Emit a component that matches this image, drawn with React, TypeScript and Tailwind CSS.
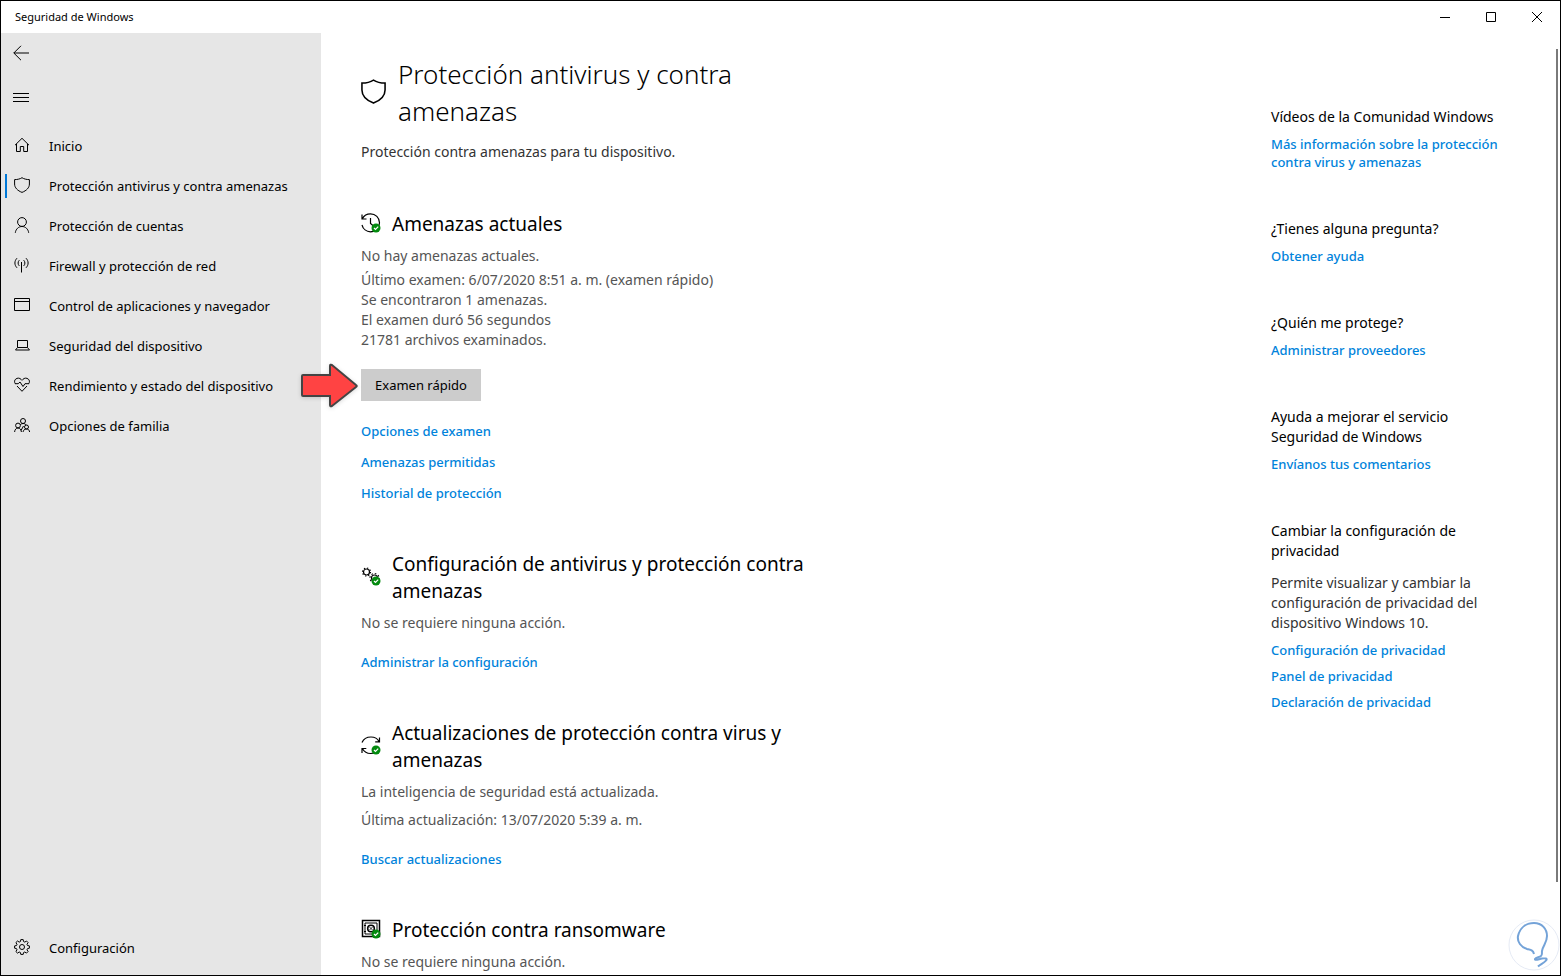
import React from "react";

interface IconProps {
  className?: string;
}

interface NavItem {
  label: string;
  icon: React.ReactNode;
  active?: boolean;
}

interface SectionProps {
  title: string;
  icon: React.ReactNode;
  children: React.ReactNode;
}

interface HelpBlockProps {
  title: string;
  links: string[];
  children?: React.ReactNode;
}

function LineIcon({
  children,
  className = "h-4 w-4",
}: {
  children: React.ReactNode;
  className?: string;
}) {
  return (
    <svg
      viewBox="0 0 16 16"
      fill="none"
      stroke="currentColor"
      strokeWidth="1"
      className={className}
      aria-hidden="true"
    >
      {children}
    </svg>
  );
}

function ShieldIcon({ className }: IconProps) {
  return (
    <LineIcon className={className}>
      <path d="M8 .7C6 2 3.500 2.600.6 2.600V7C.6 10.800 3.500 13.600 8 15.400 12.500 13.600 15.400 10.800 15.400 7V2.600C12.500 2.600 10 2 8 .7z" />
    </LineIcon>
  );
}

// Green badge that sits on the bottom right of a section icon
function CheckBadge() {
  return (
    <>
      <circle cx="15" cy="15" r="4.500" fill="#038a0e" stroke="none" />
      <path d="M13 15l1.500 1.500 2.700-2.900" stroke="#fff" strokeWidth="1.200" />
    </>
  );
}

function SectionIcon({ children }: { children: React.ReactNode }) {
  return (
    <svg
      viewBox="0 0 20 20"
      fill="none"
      stroke="#000"
      strokeWidth="1.200"
      className="mb-1 h-5 w-5 shrink-0"
      aria-hidden="true"
    >
      {children}
      <CheckBadge />
    </svg>
  );
}

const navItems: NavItem[] = [
  {
    label: "Inicio",
    icon: (
      <LineIcon>
        <path d="M1 8.200L8 1.300l7 6.900M2.500 7v7.500h3.800V9.500h3.400v5h3.800V7" />
      </LineIcon>
    ),
  },
  {
    label: "Protección antivirus y contra amenazas",
    icon: <ShieldIcon />,
    active: true,
  },
  {
    label: "Protección de cuentas",
    icon: (
      <LineIcon>
        <circle cx="8" cy="5" r="4.400" />
        <path d="M1.300 15.800C1.800 12 4.600 9.500 8 9.500s6.200 2.500 6.700 6.300" />
      </LineIcon>
    ),
  },
  {
    label: "Firewall y protección de red",
    icon: (
      <LineIcon>
        <path d="M7.500 5v10.500M3 1.200C.2 4 .2 8 3 10.800M12 1.200c2.800 2.800 2.800 6.800 0 9.600M5.300 3.200c-1.600 1.700-1.600 4 0 5.700M9.700 3.200c1.600 1.700 1.600 4 0 5.700" />
      </LineIcon>
    ),
  },
  {
    label: "Control de aplicaciones y navegador",
    icon: (
      <LineIcon>
        <path d="M.5 1.500h15v12H.5zM.5 4.500h15" />
      </LineIcon>
    ),
  },
  {
    label: "Seguridad del dispositivo",
    icon: (
      <LineIcon>
        <path d="M3.500 3.500h10v7h-10zM3.500 10.500l-2 2.500h14l-2-2.500" />
      </LineIcon>
    ),
  },
  {
    label: "Rendimiento y estado del dispositivo",
    icon: (
      <LineIcon>
        <path d="M1.200 6.700C.2 4.900.4 3.300 1.600 2.200c1.700-1.600 4.200-1.300 5.500.2l.9.900.9-.9c1.300-1.500 3.800-1.800 5.500-.2 1.200 1.100 1.400 2.700.4 4.500M3 9l5 5.300L13 9" />
        <path d="M1 6.700h3.200L6 5l3 4.500 2-2.800h4" />
      </LineIcon>
    ),
  },
  {
    label: "Opciones de familia",
    icon: (
      <LineIcon>
        <circle cx="9" cy="4" r="2.500" />
        <circle cx="4" cy="8.500" r="2.400" />
        <circle cx="12.500" cy="10" r="2" />
        <path d="M.6 15C.8 12.500 2.200 11 4 11s3.200 1.500 3.400 4M9 15c.3-1.800 1.600-3 3.500-3s2.900 1.200 3.100 3M6.200 7.800C7 7 8 6.500 9 6.500c1.500 0 2.600.6 3.200 1.700M7 13.500L9.500 9" />
      </LineIcon>
    ),
  },
];

function NavButton({ label, icon, active }: NavItem) {
  return (
    <button
      type="button"
      aria-current={active ? "page" : undefined}
      className="flex h-10 w-full items-center pl-1 text-left hover:bg-[#d4d4d4]"
    >
      <span className={active ? "h-6 w-0.5 bg-[#0078d7]" : "h-6 w-0.5"} />
      <span className="ml-[7px] pb-0.5">{icon}</span>
      <span className="ml-[19px] text-[13px] leading-5">{label}</span>
    </button>
  );
}

function TextLink({ children }: { children: React.ReactNode }) {
  return (
    <a
      href="#"
      className="text-[13px] font-medium text-[#0083db] hover:text-gray-500"
    >
      {children}
    </a>
  );
}

function Section({ title, icon, children }: SectionProps) {
  return (
    <section className="mt-12">
      <div className="mb-2 flex items-center gap-[11px]">
        {icon}
        <h2 className="text-[19px] leading-[27px]">{title}</h2>
      </div>
      <div className="text-sm leading-5 text-[#555]">{children}</div>
    </section>
  );
}

function HelpBlock({ title, links, children }: HelpBlockProps) {
  return (
    <section className="mb-12">
      <h3 className="text-sm leading-5">{title}</h3>
      {children}
      <ul className="mt-2 flex flex-col gap-2 text-[13px] leading-[18px]">
        {links.map((link) => (
          <li key={link}>
            <TextLink>{link}</TextLink>
          </li>
        ))}
      </ul>
    </section>
  );
}

function Sidebar() {
  return (
    <nav className="flex w-80 shrink-0 flex-col bg-[#e6e6e6] pb-[7px]">
      <button
        type="button"
        aria-label="Atrás"
        className="flex h-10 w-10 items-center pl-3"
      >
        <LineIcon className="h-4 w-4">
          <path d="M16 8H.8M8 .8L.8 8 8 15.200" />
        </LineIcon>
      </button>
      <button
        type="button"
        aria-label="Menú"
        className="mt-1 flex h-10 w-10 items-center pl-3"
      >
        <LineIcon className="h-4 w-4">
          <path d="M0 4.500h16M0 8.500h16M0 12.500h16" />
        </LineIcon>
      </button>
      <div className="mt-[9px]">
        {navItems.map((item) => (
          <NavButton key={item.label} {...item} />
        ))}
      </div>
      <div className="mt-auto">
        <NavButton
          label="Configuración"
          icon={
            <LineIcon>
              <circle cx="8" cy="8" r="2.500" />
              <path d="M6.800.6h2.400l.4 2 1.200.5 1.700-1.100 1.600 1.600L13 5.300l.5 1.200 1.900.4v2.300l-1.900.4-.5 1.200 1.100 1.700-1.600 1.600-1.700-1.100-1.200.5-.4 1.900H6.800l-.4-1.900-1.200-.5-1.700 1.100-1.600-1.600L3 10.800l-.5-1.200-1.900-.4V6.900l1.900-.4L3 5.300 1.900 3.600 3.500 2l1.700 1.100 1.200-.5z" />
            </LineIcon>
          }
        />
      </div>
    </nav>
  );
}

function TitleBar() {
  return (
    <header className="flex h-8 shrink-0 items-center justify-between pl-3.5">
      <span className="text-[11px] leading-4">Seguridad de Windows</span>
      <div className="flex h-full">
        <button
          type="button"
          aria-label="Minimizar"
          className="flex w-[46px] items-center justify-center"
        >
          <svg viewBox="0 0 10 10" className="h-2.5 w-2.5" stroke="#000">
            <path d="M0 5.500h10" />
          </svg>
        </button>
        <button
          type="button"
          aria-label="Maximizar"
          className="flex w-[46px] items-center justify-center"
        >
          <svg viewBox="0 0 10 10" className="h-2.5 w-2.5" stroke="#000">
            <path d="M.5.5h9v9h-9z" fill="none" />
          </svg>
        </button>
        <button
          type="button"
          aria-label="Cerrar"
          className="flex w-[46px] items-center justify-center"
        >
          <svg viewBox="0 0 10 10" className="h-2.5 w-2.5" stroke="#000">
            <path d="M0 0l10 10M10 0L0 10" />
          </svg>
        </button>
      </div>
    </header>
  );
}

export default function App() {
  return (
    <div className="relative flex h-screen flex-col overflow-hidden border border-black bg-white font-['Noto_Sans','Open_Sans',sans-serif] text-black">
      <TitleBar />
      <div className="flex min-h-0 flex-1">
        <Sidebar />

        <main className="flex min-w-0 flex-1 justify-between pl-10">
          {/* Main column */}
          <div className="w-[460px] pt-[23px]">
            <header className="pb-px">
              <div className="flex items-center gap-3">
                <ShieldIcon className="mb-1 h-[25px] w-[25px] shrink-0" />
                <h1 className="text-[26px] leading-[37px] font-light">
                  Protección antivirus y contra amenazas
                </h1>
              </div>
              <p className="mt-3 text-sm leading-5 text-[#333]">
                Protección contra amenazas para tu dispositivo.
              </p>
            </header>

            <Section
              title="Amenazas actuales"
              icon={
                <SectionIcon>
                  <path d="M1 1.500V6h4.500M1.500 5.500C3 2.500 6 .8 9.500.8a9 9 0 0 1 0 18C5.500 18.800 2 16 1 12M9.500 5v5.500l3 2.500" />
                </SectionIcon>
              }
            >
              <p>No hay amenazas actuales.</p>
              <div className="mt-1">
                <p>Último examen: 6/07/2020 8:51 a. m. (examen rápido)</p>
                <p>Se encontraron 1 amenazas.</p>
                <p>El examen duró 56 segundos</p>
                <p>21781 archivos examinados.</p>
              </div>
              <div className="relative mt-[19px] w-[120px]">
                <button
                  type="button"
                  className="h-8 w-full bg-[#ccc] text-[13px] text-black"
                >
                  Examen rápido
                </button>
                {/* Arrow pointing at the scan button */}
                <svg
                  viewBox="0 0 60 46"
                  className="absolute -top-1.5 -left-[62px] h-[46px] w-[60px] drop-shadow-sm"
                  aria-hidden="true"
                >
                  <path
                    d="M4 12h27V3q0-2 2-1l24 20q1.500 1 0 2L33 43q-2 1-2-1v-9H4q-1 0-1-1V13q0-1 1-1z"
                    fill="#ff4343"
                    stroke="#444"
                    strokeWidth="2"
                  />
                </svg>
              </div>
              <ul className="mt-5 flex flex-col gap-[11px]">
                <li>
                  <TextLink>Opciones de examen</TextLink>
                </li>
                <li>
                  <TextLink>Amenazas permitidas</TextLink>
                </li>
                <li>
                  <TextLink>Historial de protección</TextLink>
                </li>
              </ul>
            </Section>

            <Section
              title="Configuración de antivirus y protección contra amenazas"
              icon={
                <SectionIcon>
                  <circle cx="5.500" cy="6" r="3" />
                  <circle
                    cx="5.500"
                    cy="6"
                    r="4"
                    strokeDasharray="1.300 1.840"
                  />
                  <circle cx="13.500" cy="12" r="3" />
                  <circle
                    cx="13.500"
                    cy="12"
                    r="4.500"
                    strokeDasharray="1.500 2"
                  />
                </SectionIcon>
              }
            >
              <p>No se requiere ninguna acción.</p>
              <p className="mt-[19px]">
                <TextLink>Administrar la configuración</TextLink>
              </p>
            </Section>

            <Section
              title="Actualizaciones de protección contra virus y amenazas"
              icon={
                <SectionIcon>
                  <path d="M1 7.500c1.500-3.500 5-5.500 9-5.500 3.500 0 6.500 1.500 8 4.500M18.500 2.500v4.300h-4.300M18 13c-1.500 3.500-4.500 5.500-8.500 5.500-3.500 0-6.300-1.700-8-4.800M1 18v-4.500h4.300" />
                </SectionIcon>
              }
            >
              <p>La inteligencia de seguridad está actualizada.</p>
              <p className="mt-2">Última actualización: 13/07/2020 5:39 a. m.</p>
              <p className="mt-[19px]">
                <TextLink>Buscar actualizaciones</TextLink>
              </p>
            </Section>

            <Section
              title="Protección contra ransomware"
              icon={
                <SectionIcon>
                  <path d="M1.500 1.500h17v16h-17z" strokeWidth="1.500" />
                  <path
                    d="M4 4h12v11H4zM3 6.500h2M3 12.500h2"
                    strokeWidth="1"
                  />
                  <circle cx="10" cy="9.500" r="3.300" strokeWidth="1.600" />
                  <path d="M8.500 8l3 3M11.500 8l-3 3" strokeWidth=".8" />
                </SectionIcon>
              }
            >
              <p>No se requiere ninguna acción.</p>
            </Section>
          </div>

          {/* Help column */}
          <aside className="w-[289px] shrink-0 pt-[74px] pr-[49px]">
            <HelpBlock
              title="Vídeos de la Comunidad Windows"
              links={["Más información sobre la protección contra virus y amenazas"]}
            />
            <HelpBlock
              title="¿Tienes alguna pregunta?"
              links={["Obtener ayuda"]}
            />
            <HelpBlock
              title="¿Quién me protege?"
              links={["Administrar proveedores"]}
            />
            <HelpBlock
              title="Ayuda a mejorar el servicio Seguridad de Windows"
              links={["Envíanos tus comentarios"]}
            />
            <HelpBlock
              title="Cambiar la configuración de privacidad"
              links={[
                "Configuración de privacidad",
                "Panel de privacidad",
                "Declaración de privacidad",
              ]}
            >
              <p className="mt-3 text-sm leading-5 text-[#333]">
                Permite visualizar y cambiar la configuración de privacidad del
                dispositivo Windows 10.
              </p>
            </HelpBlock>
          </aside>
        </main>
      </div>

      {/* Scroll thumb */}
      <div className="absolute top-12 right-0.5 bottom-[93px] w-0.5 bg-[#7a7a7a]" />

      {/* Light bulb watermark */}
      <svg
        viewBox="0 0 52 52"
        className="absolute right-0 bottom-1 h-[52px] w-[52px]"
        fill="none"
        aria-hidden="true"
      >
        <circle cx="26" cy="26" r="25" fill="#fff" stroke="#e6ebf5" />
        <path
          d="M26 35c-1-4-3-4-7-5C13 28 9 23 10 17 12 9 18 4 26 4c8 0 13 6 13 13 0 7-4 9-5 15-.3 2 .5 4-1 5-2 1.500-5 1-6 3-.5 2 4 0 7-.5 3-.3 6-.2 4 2-2 2.500-6 4-8 6"
          stroke="#74a3d8"
          strokeWidth="2"
        />
      </svg>
    </div>
  );
}
